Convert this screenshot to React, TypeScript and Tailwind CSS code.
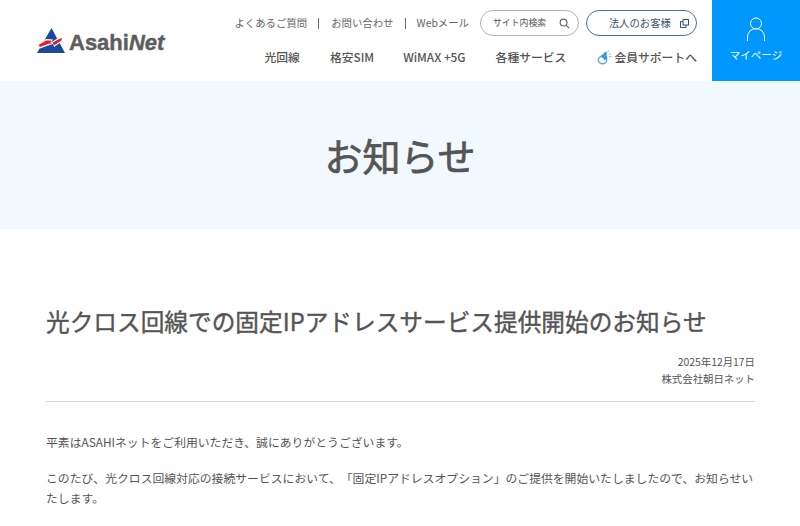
const jp = "font-['Noto_Sans_CJK_JP','Noto_Sans',sans-serif]";

function Logo() {
  return (
    <a className="flex items-end ml-[37px] mb-[28px]">
      <svg width="29" height="25" viewBox="0 0 29 25">
        <polygon points="14.5,0 28,25 0,25" fill="#1b4a9c" />
        <path d="M0.5 17 L9 11 L16 11.5 L14 14.5 L21 10 L26 8.5 L25.5 13 L17 19 L16 16 L11 17.5 L3 20.5 Z" fill="#fff" />
        <path d="M1.5 17 L9 12.5 L14.5 12.5 L12.5 16.5 L21 11.5 L25 10 L24.5 12.5 L17 17.5 L15.5 14.5 L11 16 L3 19 Z" fill="#e3202a" />
      </svg>
      <span className="ml-[3px] text-[22px] leading-[21px] font-bold text-[#5d5d5d] font-['Liberation_Sans',sans-serif] [-webkit-text-stroke:0.4px_#5d5d5d]">
        Asahi<em>Net</em>
      </span>
    </a>
  );
}

function TopLinks() {
  return (
    <div className="flex items-center text-[10.4px] text-[#666] leading-none">
      <span>よくあるご質問</span>
      <span className="w-px h-[11px] bg-[#666] ml-[11px] mr-[12px]" />
      <span>お問い合わせ</span>
      <span className="w-px h-[11px] bg-[#666] mx-[11px]" />
      <span>Webメール</span>
    </div>
  );
}

export default function App() {
  return (
    <div className={`${jp} w-[800px] h-[526px] overflow-hidden bg-white text-[#555] [text-spacing-trim:space-all]`}>
      <header className="flex h-[81px] justify-between">
        <Logo />
        <div className="flex">
          <div className="flex flex-col items-end pt-[10px] pr-[15px]">
            <div className="flex items-center">
              <TopLinks />
              <div className="ml-[11px] w-[99px] h-[26px] rounded-full border border-[#b3b3b3] flex items-center justify-between pl-[12px] pr-[8px] text-[8.9px] text-[#555]">
                <span>サイト内検索</span>
                <svg width="11" height="11" viewBox="0 0 24 24" fill="none" stroke="#666" strokeWidth="2.5">
                  <circle cx="10" cy="10" r="7.5" />
                  <path d="M16 16l6 6" />
                </svg>
              </div>
              <div className="ml-[7px] w-[111px] h-[26px] rounded-full border border-[#4a6f9e] flex items-center justify-end pr-[7px] text-[10.4px] text-[#44566c]">
                <span>法人のお客様</span>
                <svg width="9" height="9" viewBox="0 0 9 9" fill="none" stroke="#2f4f7a" strokeWidth="1" className="ml-[9px]">
                  <rect x="3" y="0.5" width="5.5" height="5.5" />
                  <path d="M3 2.5H0.5V8.5H6V6" />
                </svg>
              </div>
            </div>
            <nav className="flex items-center mt-[11px] text-[11.8px] leading-[20px] text-[#555] font-medium">
              <span>光回線</span>
              <span className="ml-[30px]">格安SIM</span>
              <span className="ml-[29px]">WiMAX +5G</span>
              <span className="ml-[30px]">各種サービス</span>
              <span className="ml-[31px] flex items-center">
                <svg width="15" height="15" viewBox="0 0 15 15" className="mr-[2px]">
                  <ellipse cx="5.5" cy="10" rx="4.2" ry="3.8" fill="none" stroke="#5aaee8" strokeWidth="1.5" />
                  <path d="M3.5 6.5L8 2l2 .5-.5 3 1 2.5-3 2.5-1-2z" fill="#3a97e0" />
                  <path d="M10.5 2.5l1-2M12 4.5l2-1M12 6.5h2.5" stroke="#7ec2f0" strokeWidth="1" />
                </svg>
                会員サポートへ
              </span>
            </nav>
          </div>
          <div className="w-[88px] bg-[#0097fe] flex flex-col items-center text-white">
            <svg width="20" height="25" viewBox="0 0 20 25" fill="none" stroke="#fff" strokeWidth="1" className="mt-[17px]">
              <circle cx="10" cy="6.5" r="5.5" />
              <path d="M1.5 24v-4a8.5 8.5 0 0 1 17 0v4" />
            </svg>
            <span className="mt-[5px] text-[10.5px] leading-[16px]">マイページ</span>
          </div>
        </div>
      </header>

      <div className="h-[148px] bg-[#f1f8fe] flex items-center justify-center">
        <h1 className="text-[38px] font-normal leading-none text-[#555] [-webkit-text-stroke:0.7px_#555]">お知らせ</h1>
      </div>

      <main className="pl-[46px] pr-[45px] pt-[75px]">
        <h2 className="text-[23.68px] leading-[34px] font-normal text-[#555] [-webkit-text-stroke:0.4px_#555]">
          光クロス回線での固定IPアドレスサービス提供開始のお知らせ
        </h2>
        <div className="mt-[15px] text-right text-[10.4px] leading-[17px]">
          <p>2025年12月17日</p>
          <p>株式会社朝日ネット</p>
        </div>
        <hr className="mt-[14px] border-[#d9d9d9]" />
        <p className="mt-[30px] text-[11.84px] leading-[20px]">平素はASAHIネットをご利用いただき、誠にありがとうございます。</p>
        <p className="mt-[16px] text-[11.84px] leading-[20px]">
          このたび、光クロス回線対応の接続サービスにおいて、「固定IPアドレスオプション」のご提供を開始いたしましたので、お知らせいたします。
        </p>
      </main>
    </div>
  );
}
